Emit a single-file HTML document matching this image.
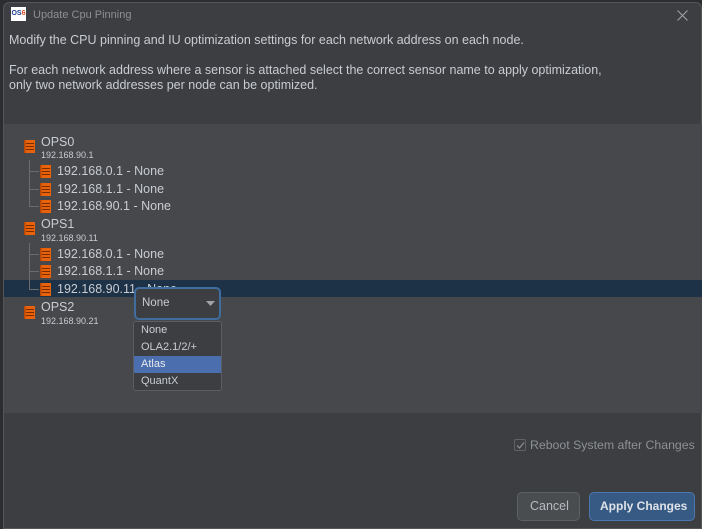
<!DOCTYPE html>
<html><head><style>
*{margin:0;padding:0;box-sizing:border-box}
body{width:702px;height:529px;background:#2b2d30;font-family:"Liberation Sans",sans-serif;color:#c9ccd1;position:relative;overflow:hidden}
.dlg{position:absolute;left:3px;top:2px;width:699px;height:527px;background:#3c3e41;border:1px solid #555;border-radius:6px 6px 0 0}
.a{position:absolute;white-space:nowrap}
.t13{font-size:12.5px}
.panel{position:absolute;left:4px;top:124px;width:698px;height:289px;background:#46484b}
.ic{position:absolute;width:11px;height:13px}
.ip{font-size:9px;color:#c9ccd1}
.ln{position:absolute;background:#6a6c6e}
</style></head><body>
<div class="dlg"></div>
<div class="a" style="left:11px;top:7px;width:15px;height:14px;background:#fff;font-size:7px;font-weight:bold;color:#1a3a8a;line-height:14px;text-align:center">OS<span style="color:#e0502a">6</span></div>
<div class="a" style="left:33px;top:9px;font-size:11px;color:#8d9094">Update Cpu Pinning</div>
<svg class="a" style="left:677px;top:10px" width="11" height="11"><path d="M0.5 0.5L10.5 10.5M10.5 0.5L0.5 10.5" stroke="#9a9da1" stroke-width="1.2"/></svg>
<div class="a t13" style="left:9px;top:33px">Modify the CPU pinning and IU optimization settings for each network address on each node.</div>
<div class="a t13" style="left:9px;top:63px">For each network address where a sensor is attached select the correct sensor name to apply optimization,</div>
<div class="a t13" style="left:9px;top:78px">only two network addresses per node can be optimized.</div>
<div class="panel"></div>
<div class="a" style="left:4px;top:280px;width:698px;height:17px;background:#1d3147"></div>

<div class="ln" style="left:29px;top:160px;width:1px;height:47px"></div>
<div class="ln" style="left:29px;top:171px;width:10px;height:1px"></div>
<div class="ln" style="left:29px;top:189px;width:10px;height:1px"></div>
<div class="ln" style="left:29px;top:206px;width:10px;height:1px"></div>
<div class="ln" style="left:29px;top:243px;width:1px;height:47px"></div>
<div class="ln" style="left:29px;top:254px;width:10px;height:1px"></div>
<div class="ln" style="left:29px;top:271px;width:10px;height:1px"></div>
<div class="ln" style="left:29px;top:289px;width:10px;height:1px"></div>

<svg width="0" height="0" style="position:absolute"><defs><g id="s"><rect x="0" y="0" width="11" height="13" fill="#e8620c"/><path d="M2 3.5H10M2 6.5H10M2 9.5H10" stroke="#7a2c00" stroke-width="1"/><rect x="0" y="0" width="1.5" height="13" fill="#b84800"/></g></defs></svg>

<svg class="ic" style="left:24px;top:140px"><use href="#s"/></svg>
<div class="a t13" style="left:41px;top:135px">OPS0</div>
<div class="a ip" style="left:41px;top:150px">192.168.90.1</div>
<svg class="ic" style="left:40px;top:165px"><use href="#s"/></svg>
<div class="a t13" style="left:57px;top:164px">192.168.0.1 - None</div>
<svg class="ic" style="left:40px;top:183px"><use href="#s"/></svg>
<div class="a t13" style="left:57px;top:182px">192.168.1.1 - None</div>
<svg class="ic" style="left:40px;top:200px"><use href="#s"/></svg>
<div class="a t13" style="left:57px;top:199px">192.168.90.1 - None</div>

<svg class="ic" style="left:24px;top:222px"><use href="#s"/></svg>
<div class="a t13" style="left:41px;top:217px">OPS1</div>
<div class="a ip" style="left:41px;top:233px">192.168.90.11</div>
<svg class="ic" style="left:40px;top:248px"><use href="#s"/></svg>
<div class="a t13" style="left:57px;top:247px">192.168.0.1 - None</div>
<svg class="ic" style="left:40px;top:265px"><use href="#s"/></svg>
<div class="a t13" style="left:57px;top:264px">192.168.1.1 - None</div>
<svg class="ic" style="left:40px;top:283px"><use href="#s"/></svg>
<div class="a t13" style="left:57px;top:282px">192.168.90.11 - None</div>

<svg class="ic" style="left:24px;top:306px"><use href="#s"/></svg>
<div class="a t13" style="left:41px;top:300px">OPS2</div>
<div class="a ip" style="left:41px;top:316px">192.168.90.21</div>

<div class="a" style="left:134px;top:287px;width:87px;height:33px;background:#3c3e41;border:2px solid #3e6d9e;border-radius:5px"></div>
<div class="a" style="left:142px;top:297px;font-size:11.5px">None</div>
<svg class="a" style="left:206px;top:301px" width="9" height="5"><path d="M0 0H9L4.5 5Z" fill="#a0a3a7"/></svg>
<div class="a" style="left:133px;top:321px;width:89px;height:70px;background:#3c3e41;border:1px solid #5a5d61;border-radius:3px"></div>
<div class="a" style="left:134px;top:356px;width:87px;height:17px;background:#4b6eaf"></div>
<div class="a" style="left:141px;top:324px;font-size:11px">None</div>
<div class="a" style="left:141px;top:341px;font-size:11px">OLA2.1/2/+</div>
<div class="a" style="left:141px;top:358px;font-size:11px;color:#e8eaee">Atlas</div>
<div class="a" style="left:141px;top:375px;font-size:11px">QuantX</div>

<div class="a" style="left:514px;top:439px;width:12px;height:12px;border:1px solid #5f6266;border-radius:2px;background:#3c3e41"></div>
<svg class="a" style="left:515px;top:440px" width="11" height="11"><path d="M2 5.5L4.5 8L9 2.5" stroke="#8d9094" stroke-width="1.2" fill="none"/></svg>
<div class="a" style="left:530px;top:438px;color:#8d9094;font-size:12.3px">Reboot System after Changes</div>

<div class="a" style="left:517px;top:492px;width:63px;height:29px;background:#4a4d50;border:1px solid #5d6064;border-radius:5px"></div>
<div class="a" style="left:530px;top:499px;color:#b8bbbf;font-size:12.5px">Cancel</div>
<div class="a" style="left:589px;top:492px;width:106px;height:29px;background:#375a85;border:1px solid #4a78ad;border-radius:5px"></div>
<div class="a" style="left:600px;top:499px;color:#dfe3e8;font-weight:bold;font-size:12px">Apply Changes</div>
</body></html>
